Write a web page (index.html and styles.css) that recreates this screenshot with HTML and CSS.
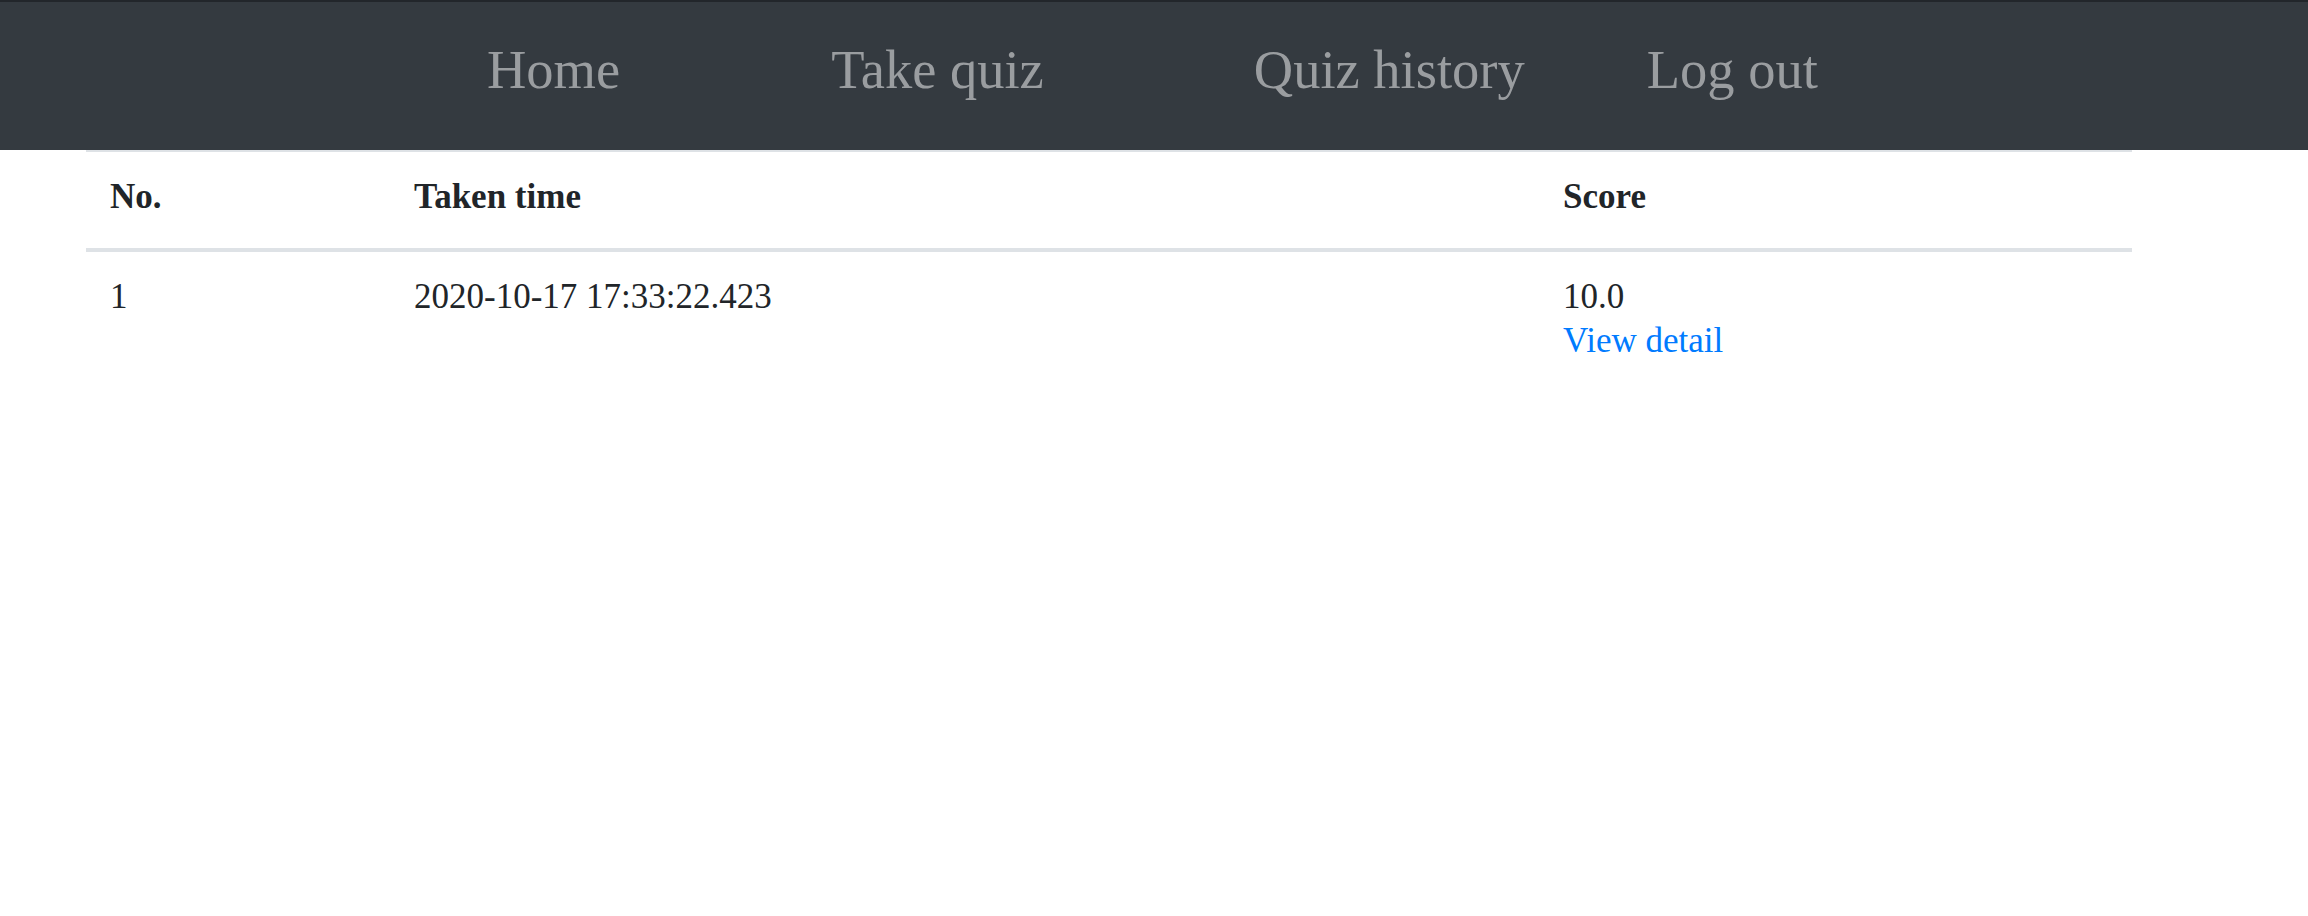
FILE: index.html
```html
<!DOCTYPE html>
<html lang="en">
<head>
<meta charset="utf-8">
<title>Quiz history</title>
<link rel="stylesheet" href="styles.css">
</head>
<body>
<nav class="navbar">
  <ul class="nav-list">
    <li class="nav-item nav-home"><a class="nav-link" href="#">Home</a></li>
    <li class="nav-item nav-take"><a class="nav-link" href="#">Take quiz</a></li>
    <li class="nav-item nav-history"><a class="nav-link" href="#">Quiz history</a></li>
    <li class="nav-item nav-logout"><a class="nav-link" href="#">Log out</a></li>
  </ul>
</nav>
<main class="content">
  <table class="history-table">
    <thead>
      <tr>
        <th class="col-no">No.</th>
        <th class="col-time">Taken time</th>
        <th class="col-score">Score</th>
      </tr>
    </thead>
    <tbody>
      <tr>
        <td>1</td>
        <td>2020-10-17 17:33:22.423</td>
        <td>10.0<br><a class="detail-link" href="#">View detail</a></td>
      </tr>
    </tbody>
  </table>
</main>
</body>
</html>
```

FILE: styles.css
```css
* {
  box-sizing: border-box;
}

html, body {
  margin: 0;
  padding: 0;
  background: #ffffff;
}

body {
  font-family: "Liberation Serif", "Times New Roman", serif;
  color: #212529;
}

.navbar {
  height: 150px;
  background: #343a40;
  border-top: 2px solid #22262b;
  padding-top: 37px;
}

.nav-list {
  list-style: none;
  margin: 0;
  padding: 0 0 0 487px;
  display: flex;
  align-items: flex-start;
}

.nav-link {
  display: block;
  font-size: 54.5px;
  line-height: 61px;
  color: #9a9da0;
  text-decoration: none;
  white-space: nowrap;
}

.nav-take {
  margin-left: 211px;
}

.nav-history {
  margin-left: 210px;
}

.nav-logout {
  margin-left: 122px;
}

.content {
  padding-left: 86px;
}

.history-table {
  width: 2046px;
  border-collapse: collapse;
  font-size: 35px;
  line-height: 44px;
  border-top: 2px solid #dee2e6;
}

.history-table th,
.history-table td {
  text-align: left;
  vertical-align: top;
  padding: 23px 24px 29px 24px;
}

.history-table th {
  font-weight: bold;
  border-bottom: 4px solid #dee2e6;
}

.col-no {
  width: 304px;
}

.col-time {
  width: 1149px;
}

.detail-link {
  color: #007bff;
  text-decoration: none;
}
```
